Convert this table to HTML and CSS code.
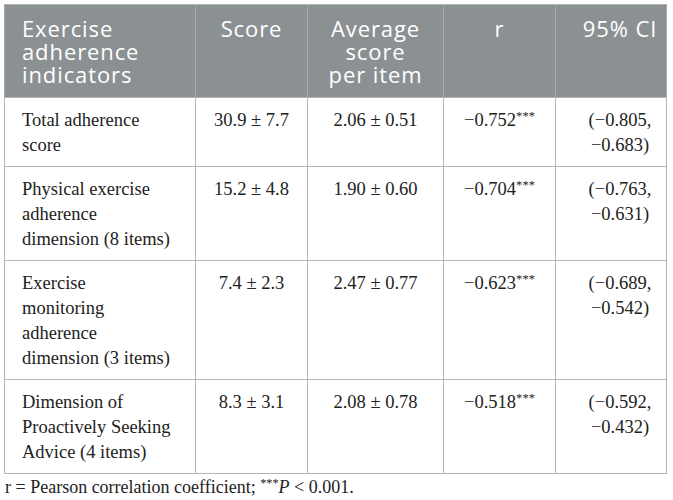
FILE: index.html
```html
<!DOCTYPE html>
<html lang="en">
<head>
<meta charset="utf-8">
<title>Exercise adherence indicators</title>
<link rel="stylesheet" href="styles.css">
</head>
<body>
<div class="page">
  <table class="data">
    <colgroup>
      <col class="c1"><col class="c2"><col class="c3"><col class="c4"><col class="c5">
    </colgroup>
    <thead>
      <tr>
        <th class="left"><span class="ln">Exercise</span><span class="ln">adherence</span><span class="ln">indicators</span></th>
        <th><span class="ln">Score</span></th>
        <th><span class="ln">Average</span><span class="ln">score</span><span class="ln">per item</span></th>
        <th><span class="ln">r</span></th>
        <th class="ci"><span class="ln">95% CI</span></th>
      </tr>
    </thead>
    <tbody>
      <tr>
        <td class="left">Total adherence<br>score</td>
        <td>30.9 ± 7.7</td>
        <td>2.06 ± 0.51</td>
        <td>−0.752<sup>***</sup></td>
        <td class="ci">(−0.805,<br>−0.683)</td>
      </tr>
      <tr>
        <td class="left">Physical exercise<br>adherence<br>dimension (8 items)</td>
        <td>15.2 ± 4.8</td>
        <td>1.90 ± 0.60</td>
        <td>−0.704<sup>***</sup></td>
        <td class="ci">(−0.763,<br>−0.631)</td>
      </tr>
      <tr>
        <td class="left">Exercise<br>monitoring<br>adherence<br>dimension (3 items)</td>
        <td>7.4 ± 2.3</td>
        <td>2.47 ± 0.77</td>
        <td>−0.623<sup>***</sup></td>
        <td class="ci">(−0.689,<br>−0.542)</td>
      </tr>
      <tr>
        <td class="left">Dimension of<br>Proactively Seeking<br>Advice (4 items)</td>
        <td>8.3 ± 3.1</td>
        <td>2.08 ± 0.78</td>
        <td>−0.518<sup>***</sup></td>
        <td class="ci">(−0.592,<br>−0.432)</td>
      </tr>
    </tbody>
  </table>
  <p class="note">r = Pearson correlation coefficient; <sup>***</sup><i>P</i> &lt; 0.001.</p>
</div>
</body>
</html>
```
FILE: styles.css
```css
html, body {
  margin: 0;
  padding: 0;
  background: #ffffff;
}

.page {
  padding: 4px 0 0 4px;
  font-family: "Liberation Serif", "Times New Roman", serif;
  color: #222222;
}

.data {
  border-collapse: collapse;
  table-layout: fixed;
  width: 662px;
  border: 1px solid #b3b5b6;
}

.c1 { width: 191px; }
.c2 { width: 112px; }
.c3 { width: 136px; }
.c4 { width: 112px; }
.c5 { width: 111px; }

.data th {
  background: #8b9093;
  color: #ffffff;
  font-family: "Open Sans", "Noto Sans", sans-serif;
  font-weight: 400;
  font-size: 22px;
  line-height: 23px;
  letter-spacing: 0.9px;
  text-align: center;
  vertical-align: top;
  padding: 12px 8px 11px 8px;
  border-left: 1px solid #a6aaac;
  border-right: 1px solid #a6aaac;
}

.data th .ln {
  display: block;
  height: 23px;
  line-height: 23px;
}

.data td {
  font-size: 18.5px;
  line-height: 25px;
  text-align: center;
  vertical-align: top;
  padding: 10px 8px 8px 8px;
  border: 1px solid #b3b5b6;
}

.data .left {
  text-align: left;
  padding-left: 17px;
}

.data .ci {
  padding-left: 24px;
  padding-right: 6px;
}

.data sup {
  font-size: 0.68em;
  line-height: 0;
  vertical-align: 0.5em;
}

.note {
  margin: 2px 0 0 1px;
  font-size: 18px;
  line-height: 22px;
  color: #222222;
}

.note sup {
  font-size: 0.68em;
  line-height: 0;
  vertical-align: 0.5em;
}
```
